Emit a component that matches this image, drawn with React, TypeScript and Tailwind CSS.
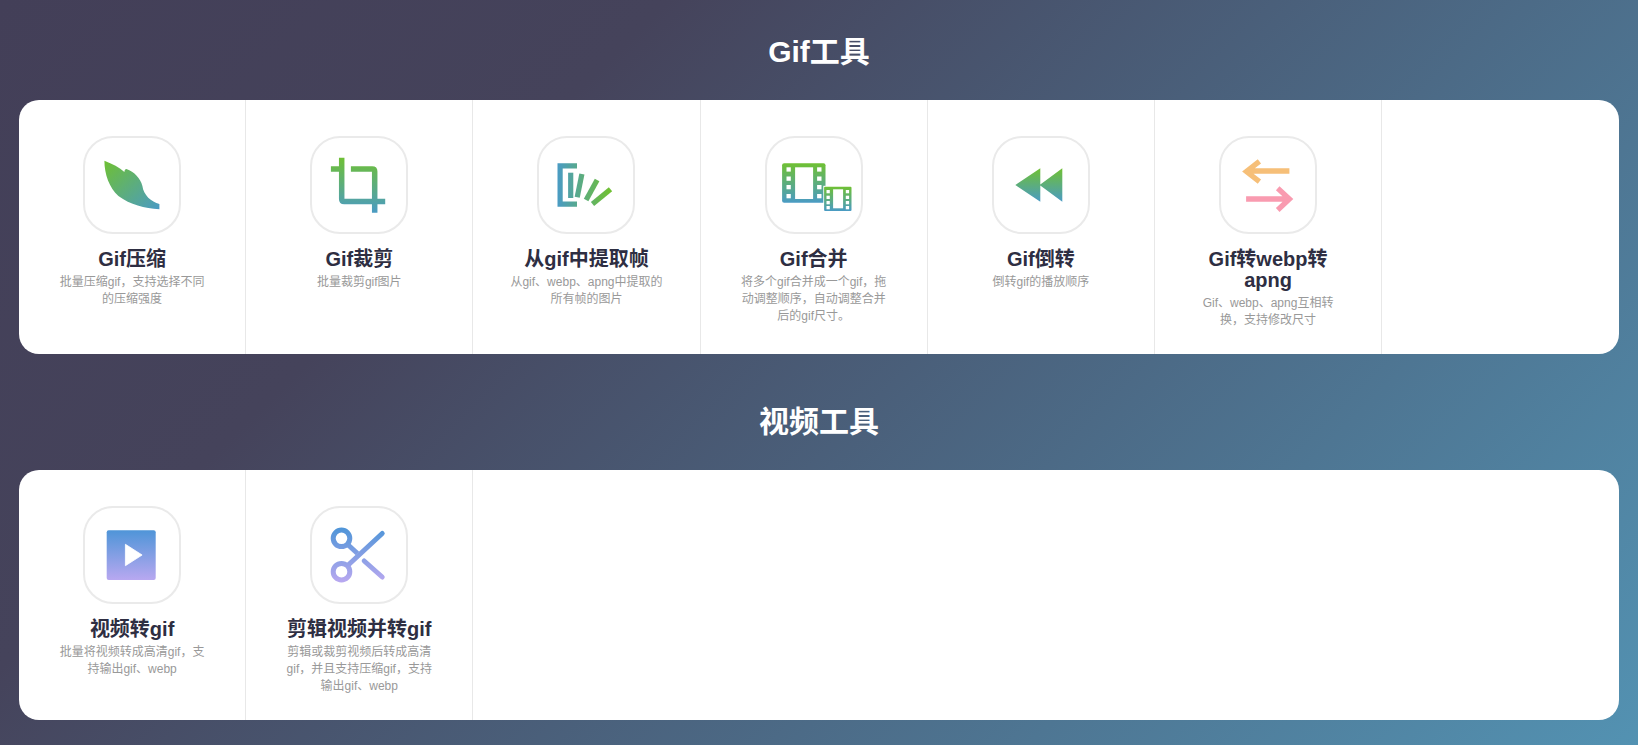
const sans = "font-['Liberation_Sans','Noto_Sans_CJK_SC',sans-serif]";

function Grad({ id, from, to, dir = "v" }: { id: string; from: string; to: string; dir?: "v" | "h" | "d" }) {
  const end = dir === "v" ? { x2: "0", y2: "1" } : dir === "h" ? { x2: "1", y2: "0" } : { x2: "1", y2: "1" };
  return (
    <linearGradient id={id} x1="0" y1="0" {...end}>
      <stop offset="0" stopColor={from} />
      <stop offset="1" stopColor={to} />
    </linearGradient>
  );
}

const GREEN = "#6fc033";
const BLUE = "#4a9bc4";

function Leaf() {
  return (
    <svg viewBox="2.6 2 94 94" className="h-full w-full">
      <defs>
        <Grad id="leaf" from={GREEN} to={BLUE} dir="d" />
      </defs>
      <path
        d="M22 24.7 C30 28 37 31 42 36 C42 34 43 33 44 33 C52 36 58 42 60 50 C61 59 69 66 77 68 V73.3 C62 72 48 69 36 60 C27 52 22 38 22 24.7 Z"
        fill="url(#leaf)"
      />
    </svg>
  );
}

function Crop() {
  return (
    <svg viewBox="2.8 2 94 94" className="h-full w-full">
      <defs>
        <linearGradient id="crop" gradientUnits="userSpaceOnUse" x1="0" y1="21" x2="0" y2="77">
          <stop offset="0" stopColor={GREEN} />
          <stop offset="1" stopColor={BLUE} />
        </linearGradient>
      </defs>
      <path
        d="M21.7 33 H35 M32.5 21.7 V63 Q32.5 65.5 35 65.5 H76 M41.7 33 H63 Q65.5 33 65.5 35.5 V76.7"
        fill="none"
        stroke="url(#crop)"
        strokeWidth="5.5"
      />
    </svg>
  );
}

function Frames() {
  return (
    <svg viewBox="2.5 2 94 94" className="h-full w-full">
      <defs>
        <linearGradient id="frames" gradientUnits="userSpaceOnUse" x1="21" y1="0" x2="73" y2="0">
          <stop offset="0" stopColor={BLUE} />
          <stop offset="1" stopColor={GREEN} />
        </linearGradient>
      </defs>
      <g fill="none" stroke="url(#frames)" strokeWidth="5.2">
        <path d="M40.5 29.8 H23.6 V68.2 H40.5" />
        <path d="M34.2 36.7 V62" />
        <path d="M45.4 38 L40.7 61.3" />
        <path d="M60.6 44 L49.6 64" />
        <path d="M74 53.3 L56 68" />
      </g>
    </svg>
  );
}

function Film() {
  const holesL = [31.3, 40.5, 49, 58];
  const holesS = [54, 59.7, 65, 70];
  return (
    <svg viewBox="3.2 2 94 94" className="h-full w-full">
      <defs>
        <Grad id="film" from={GREEN} to={BLUE} />
      </defs>
      <rect x="18.3" y="27.3" width="43.4" height="39.4" rx="2" fill="url(#film)" />
      <rect x="31.3" y="31.3" width="18" height="31.7" fill="#fff" />
      {holesL.map((y) => (
        <g key={y} fill="#fff">
          <rect x="22.7" y={y} width="4.3" height="4.3" />
          <rect x="53.3" y={y} width="4.4" height="4.3" />
        </g>
      ))}
      <rect x="59.5" y="49.8" width="29" height="26" fill="#fff" />
      <rect x="60.3" y="50.7" width="27.4" height="24.3" rx="1" fill="url(#film)" />
      <rect x="69.3" y="53.3" width="10" height="19" fill="#fff" />
      {holesS.map((y) => (
        <g key={y} fill="#fff">
          <rect x="62.7" y={y} width="3.3" height="3.3" />
          <rect x="82" y={y} width="3.3" height="3.3" />
        </g>
      ))}
    </svg>
  );
}

function Rewind() {
  return (
    <svg viewBox="3.4 2 94 94" className="h-full w-full">
      <defs>
        <Grad id="rew" from={GREEN} to={BLUE} />
      </defs>
      <path d="M24.7 49 L49.7 32.3 V48.5 L71.7 32.3 V65.7 L49.7 49.5 V65.7 Z" fill="url(#rew)" />
    </svg>
  );
}

function Swap() {
  return (
    <svg viewBox="3.6 2 94 94" className="h-full w-full" fill="none" strokeWidth="5.3">
      <path d="M29 35 H72 M42 25.3 L29 35.5 L42 45.7" stroke="#f6bf78" />
      <path d="M28.7 63 H72 M60.3 52.3 L72 63 L60.3 74" stroke="#f99bb0" />
    </svg>
  );
}

function Play() {
  return (
    <svg viewBox="2.6 2 94 94" className="h-full w-full">
      <defs>
        <Grad id="play" from="#4f95d8" to="#b8a8f0" />
      </defs>
      <rect x="24.3" y="24.3" width="49" height="49.7" rx="2" fill="url(#play)" />
      <path d="M43 38.3 L59.7 49 L43 59.7 Z" fill="#fff" strokeLinejoin="round" stroke="#fff" strokeWidth="0.8" />
    </svg>
  );
}

function Scissors() {
  return (
    <svg viewBox="2.8 2 94 94" className="h-full w-full">
      <defs>
        <linearGradient id="sci" gradientUnits="userSpaceOnUse" x1="0" y1="22" x2="0" y2="76">
          <stop offset="0" stopColor="#4f95d8" />
          <stop offset="1" stopColor="#b8a8f0" />
        </linearGradient>
      </defs>
      <g fill="none" stroke="url(#sci)" strokeWidth="5">
        <circle cx="32.3" cy="32.3" r="8.3" />
        <circle cx="32.3" cy="65.7" r="8.3" />
        <path d="M38.5 38.5 L48.3 47.5" />
        <path d="M38.5 59.5 L73 27.5" strokeLinecap="round" />
        <path d="M55 55 L73 71" strokeLinecap="round" />
      </g>
    </svg>
  );
}

type Tool = { title: string; desc: string; icon: React.ReactNode };

const gifTools: Tool[] = [
  { title: "Gif压缩", desc: "批量压缩gif，支持选择不同的压缩强度", icon: <Leaf /> },
  { title: "Gif裁剪", desc: "批量裁剪gif图片", icon: <Crop /> },
  { title: "从gif中提取帧", desc: "从gif、webp、apng中提取的所有帧的图片", icon: <Frames /> },
  { title: "Gif合并", desc: "将多个gif合并成一个gif，拖动调整顺序，自动调整合并后的gif尺寸。", icon: <Film /> },
  { title: "Gif倒转", desc: "倒转gif的播放顺序", icon: <Rewind /> },
  { title: "Gif转webp转apng", desc: "Gif、webp、apng互相转换，支持修改尺寸", icon: <Swap /> },
];

const videoTools: Tool[] = [
  { title: "视频转gif", desc: "批量将视频转成高清gif，支持输出gif、webp", icon: <Play /> },
  { title: "剪辑视频并转gif", desc: "剪辑或裁剪视频后转成高清gif，并且支持压缩gif，支持输出gif、webp", icon: <Scissors /> },
];

function ToolCell({ tool }: { tool: Tool }) {
  return (
    <div className="flex w-[14.2%] flex-col items-center border-r border-[#e8e8e8] pt-9 pb-[25px] text-center">
      <div className="h-[98px] w-[98px] rounded-[30px] border-2 border-[#eaeaea] bg-white">{tool.icon}</div>
      <h3 className="mt-[15px] mb-1 w-[150px] text-[20px] leading-[21px] font-bold text-[#2e2e42]">{tool.title}</h3>
      <p className="w-[154px] text-[12px] leading-[17px] text-[#999]">{tool.desc}</p>
    </div>
  );
}

function Section({ title, tools }: { title: string; tools: Tool[] }) {
  return (
    <section className="mb-4">
      <h2 className="pt-[31px] pb-[27px] text-center text-[30px] leading-[42px] font-bold text-white">{title}</h2>
      <div className="flex rounded-[20px] bg-white">
        {tools.map((t) => (
          <ToolCell key={t.title} tool={t} />
        ))}
      </div>
    </section>
  );
}

export default function App() {
  return (
    <div
      className={`${sans} h-[745px] overflow-hidden bg-[linear-gradient(135deg,#433f58_0%,#45435b_28%,#5392b2_100%)] px-[19px]`}
    >
      <Section title="Gif工具" tools={gifTools} />
      <Section title="视频工具" tools={videoTools} />
    </div>
  );
}
